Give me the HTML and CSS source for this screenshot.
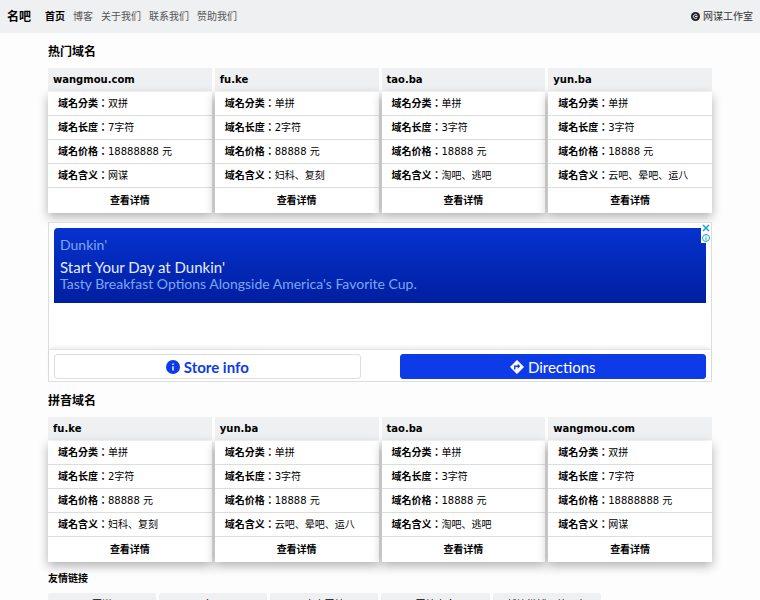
FILE: index.html
```html
<!DOCTYPE html>
<html lang="zh-CN">
<head>
  <meta charset="UTF-8">
  <meta name="viewport" content="width=device-width, initial-scale=1">
  <title>名吧</title>
  <link rel="stylesheet" href="styles.css">
</head>
<body>
  <!-- 顶部导航 -->
  <header class="topbar">
    <a class="brand" href="#">名吧</a>
    <nav class="nav">
      <a class="active" href="#">首页</a>
      <a href="#">博客</a>
      <a href="#">关于我们</a>
      <a href="#">联系我们</a>
      <a href="#">赞助我们</a>
    </nav>
    <a class="studio" href="#">
      <svg width="9" height="9" viewBox="0 0 18 18"><circle cx="9" cy="9" r="9" fill="#222"/><path d="M12.500 6.500A4.200 4.200 0 1 0 12.500 11.500M8 9h5" fill="none" stroke="#eff0f2" stroke-width="2"/></svg>
      <span>网谋工作室</span>
    </a>
  </header>

  <main class="container">
    <!-- 热门域名 -->
    <h2>热门域名</h2>
    <div class="cards">
      <section class="card">
        <h3>wangmou.com</h3>
        <ul>
          <li><b>域名分类：</b>双拼</li>
          <li><b>域名长度：</b>7字符</li>
          <li><b>域名价格：</b>18888888 元</li>
          <li><b>域名含义：</b>网谋</li>
          <li class="more"><a href="#">查看详情</a></li>
        </ul>
      </section>
      <section class="card">
        <h3>fu.ke</h3>
        <ul>
          <li><b>域名分类：</b>单拼</li>
          <li><b>域名长度：</b>2字符</li>
          <li><b>域名价格：</b>88888 元</li>
          <li><b>域名含义：</b>妇科、复刻</li>
          <li class="more"><a href="#">查看详情</a></li>
        </ul>
      </section>
      <section class="card">
        <h3>tao.ba</h3>
        <ul>
          <li><b>域名分类：</b>单拼</li>
          <li><b>域名长度：</b>3字符</li>
          <li><b>域名价格：</b>18888 元</li>
          <li><b>域名含义：</b>淘吧、逃吧</li>
          <li class="more"><a href="#">查看详情</a></li>
        </ul>
      </section>
      <section class="card">
        <h3>yun.ba</h3>
        <ul>
          <li><b>域名分类：</b>单拼</li>
          <li><b>域名长度：</b>3字符</li>
          <li><b>域名价格：</b>18888 元</li>
          <li><b>域名含义：</b>云吧、晕吧、运八</li>
          <li class="more"><a href="#">查看详情</a></li>
        </ul>
      </section>
    </div>

    <!-- 广告 -->
    <aside class="ad">
      <div class="ad-banner">
        <p class="ad-brand">Dunkin'</p>
        <p class="ad-title">Start Your Day at Dunkin'</p>
        <p class="ad-text">Tasty Breakfast Options Alongside America's Favorite Cup.</p>
      </div>
      <div class="ad-actions">
        <a class="ad-button" href="#">
          <svg width="14" height="14" viewBox="0 0 20 20"><circle cx="10" cy="10" r="10" fill="#0d3be8"/><path d="M10 9v6M10 5v2" stroke="#fff" stroke-width="2"/></svg>
          <span>Store info</span>
        </a>
        <a class="ad-button primary" href="#">
          <svg width="14" height="14" viewBox="0 0 20 20"><path d="M10 0.500L19.500 10L10 19.500L0.500 10Z" fill="#fff" stroke="#fff" stroke-linejoin="round"/><path d="M6.800 13.500V9h5.500" fill="none" stroke="#0d3be8" stroke-width="2"/><path d="M11 5.500L14.700 9L11 12.500Z" fill="#0d3be8"/></svg>
          <span>Directions</span>
        </a>
      </div>
      <div class="ad-corner">
        <button type="button" aria-label="关闭广告"><svg width="8" height="8" viewBox="0 0 8 8"><path d="M1 1l6 6M7 1L1 7" stroke="#16a5cf" stroke-width="1.500"/></svg></button>
        <button type="button" aria-label="广告信息"><svg width="8" height="8" viewBox="0 0 8 8"><circle cx="4" cy="4" r="3.500" fill="none" stroke="#16a5cf"/><path d="M4 1.500v1M4 3.200v3.200" stroke="#16a5cf"/></svg></button>
      </div>
    </aside>

    <!-- 拼音域名 -->
    <h2>拼音域名</h2>
    <div class="cards">
      <section class="card">
        <h3>fu.ke</h3>
        <ul>
          <li><b>域名分类：</b>单拼</li>
          <li><b>域名长度：</b>2字符</li>
          <li><b>域名价格：</b>88888 元</li>
          <li><b>域名含义：</b>妇科、复刻</li>
          <li class="more"><a href="#">查看详情</a></li>
        </ul>
      </section>
      <section class="card">
        <h3>yun.ba</h3>
        <ul>
          <li><b>域名分类：</b>单拼</li>
          <li><b>域名长度：</b>3字符</li>
          <li><b>域名价格：</b>18888 元</li>
          <li><b>域名含义：</b>云吧、晕吧、运八</li>
          <li class="more"><a href="#">查看详情</a></li>
        </ul>
      </section>
      <section class="card">
        <h3>tao.ba</h3>
        <ul>
          <li><b>域名分类：</b>单拼</li>
          <li><b>域名长度：</b>3字符</li>
          <li><b>域名价格：</b>18888 元</li>
          <li><b>域名含义：</b>淘吧、逃吧</li>
          <li class="more"><a href="#">查看详情</a></li>
        </ul>
      </section>
      <section class="card">
        <h3>wangmou.com</h3>
        <ul>
          <li><b>域名分类：</b>双拼</li>
          <li><b>域名长度：</b>7字符</li>
          <li><b>域名价格：</b>18888888 元</li>
          <li><b>域名含义：</b>网谋</li>
          <li class="more"><a href="#">查看详情</a></li>
        </ul>
      </section>
    </div>

    <!-- 友情链接 -->
    <h4>友情链接</h4>
    <div class="links">
      <a href="#">网谋</a>
      <a href="#">名吧</a>
      <a href="#">广方网站</a>
      <a href="#">网站大全</a>
      <a href="#">新浪微博开放平台</a>
    </div>
  </main>
</body>
</html>
```
FILE: styles.css
```css
* {
  margin: 0;
  padding: 0;
  box-sizing: border-box;
}

html {
  overflow: hidden;
}

body {
  font-family: "DejaVu Sans", "Noto Sans CJK SC", sans-serif;
  font-size: 10px;
  line-height: 16px;
  color: #000;
  background: #fdfdfd;
}

a {
  color: inherit;
  text-decoration: none;
}

ul {
  list-style: none;
}

svg {
  display: block;
}

/* 顶部导航 */
.topbar {
  display: flex;
  align-items: center;
  height: 33px;
  padding: 0 7px;
  background: #eff0f2;
}

.brand {
  margin-right: 14px;
  font-size: 12px;
  font-weight: bold;
}

.nav {
  display: flex;
  gap: 8px;
  color: #555;
}

.nav .active {
  color: #000;
  font-weight: bold;
}

.studio {
  display: flex;
  align-items: center;
  gap: 3px;
  margin-left: auto;
  color: #333;
}

/* 主体 */
.container {
  padding: 0 48px;
}

h2 {
  padding: 10px 0 7px;
  font-size: 12px;
  line-height: 18px;
}

/* 域名卡片 */
.cards {
  display: grid;
  grid-template-columns: repeat(4, 1fr);
  gap: 3px;
}

.card h3 {
  height: 23px;
  padding: 0 5px;
  font-size: 10px;
  line-height: 23px;
  background: #eff0f2;
}

.card ul {
  margin-top: 1px;
  box-shadow: 0 4px 10px rgba(0, 0, 0, 0.3);
}

.card li {
  height: 24px;
  padding: 0 10px;
  line-height: 24px;
  background: #fff;
  border-bottom: 1px solid #ddd;
}

/* 冒号居中 */
.card b {
  font-family: "DejaVu Sans", "Noto Sans CJK TC", sans-serif;
  font-feature-settings: "locl" 0;
}

.card .more {
  height: 25px;
  border-bottom: 0;
  line-height: 25px;
  font-weight: bold;
  text-align: center;
}

/* 广告 */
.ad {
  position: relative;
  margin-top: 9px;
  background: #fff;
  border: 1px solid #ddd;
  font-family: "Lato", "Open Sans", sans-serif;
}

.ad-banner {
  height: 75px;
  margin: 5px 5px 46px;
  padding: 9px 6px;
  color: #7fa6f2;
  background: linear-gradient(#0632cf, #001fa0);
  border-radius: 4px 4px 0 0;
  font-size: 14px;
}

.ad-title {
  padding-top: 5px;
  color: #e4edff;
  font-size: 15px;
  line-height: 18px;
}

.ad-actions {
  display: flex;
  gap: 39px;
  padding: 4px 5px 2px;
  border-top: 1px solid #e4e4e4;
  box-shadow: 0 -3px 4px -1px rgba(0, 0, 0, 0.08);
}

.ad-button {
  display: flex;
  flex: 1;
  align-items: center;
  justify-content: center;
  gap: 4px;
  height: 25px;
  color: #0d3be8;
  border: 1px solid #ddd;
  border-radius: 3px;
  font-size: 15px;
  font-weight: bold;
}

.ad-button.primary {
  color: #fff;
  background: #0d3be8;
  border-color: #0d3be8;
  font-weight: normal;
}

.ad-corner {
  position: absolute;
  top: 0;
  right: 0;
}

.ad-corner button {
  display: block;
  padding: 1px;
  background: #fff;
  border: 0;
}

/* 友情链接 */
h4 {
  padding-top: 9px;
  font-size: 10px;
}

.links {
  display: grid;
  grid-template-columns: repeat(6, 1fr);
  gap: 3px;
  margin-top: 6px;
}

.links a {
  height: 24px;
  line-height: 24px;
  text-align: center;
  background: #eff0f2;
  border-radius: 2px;
}
```
